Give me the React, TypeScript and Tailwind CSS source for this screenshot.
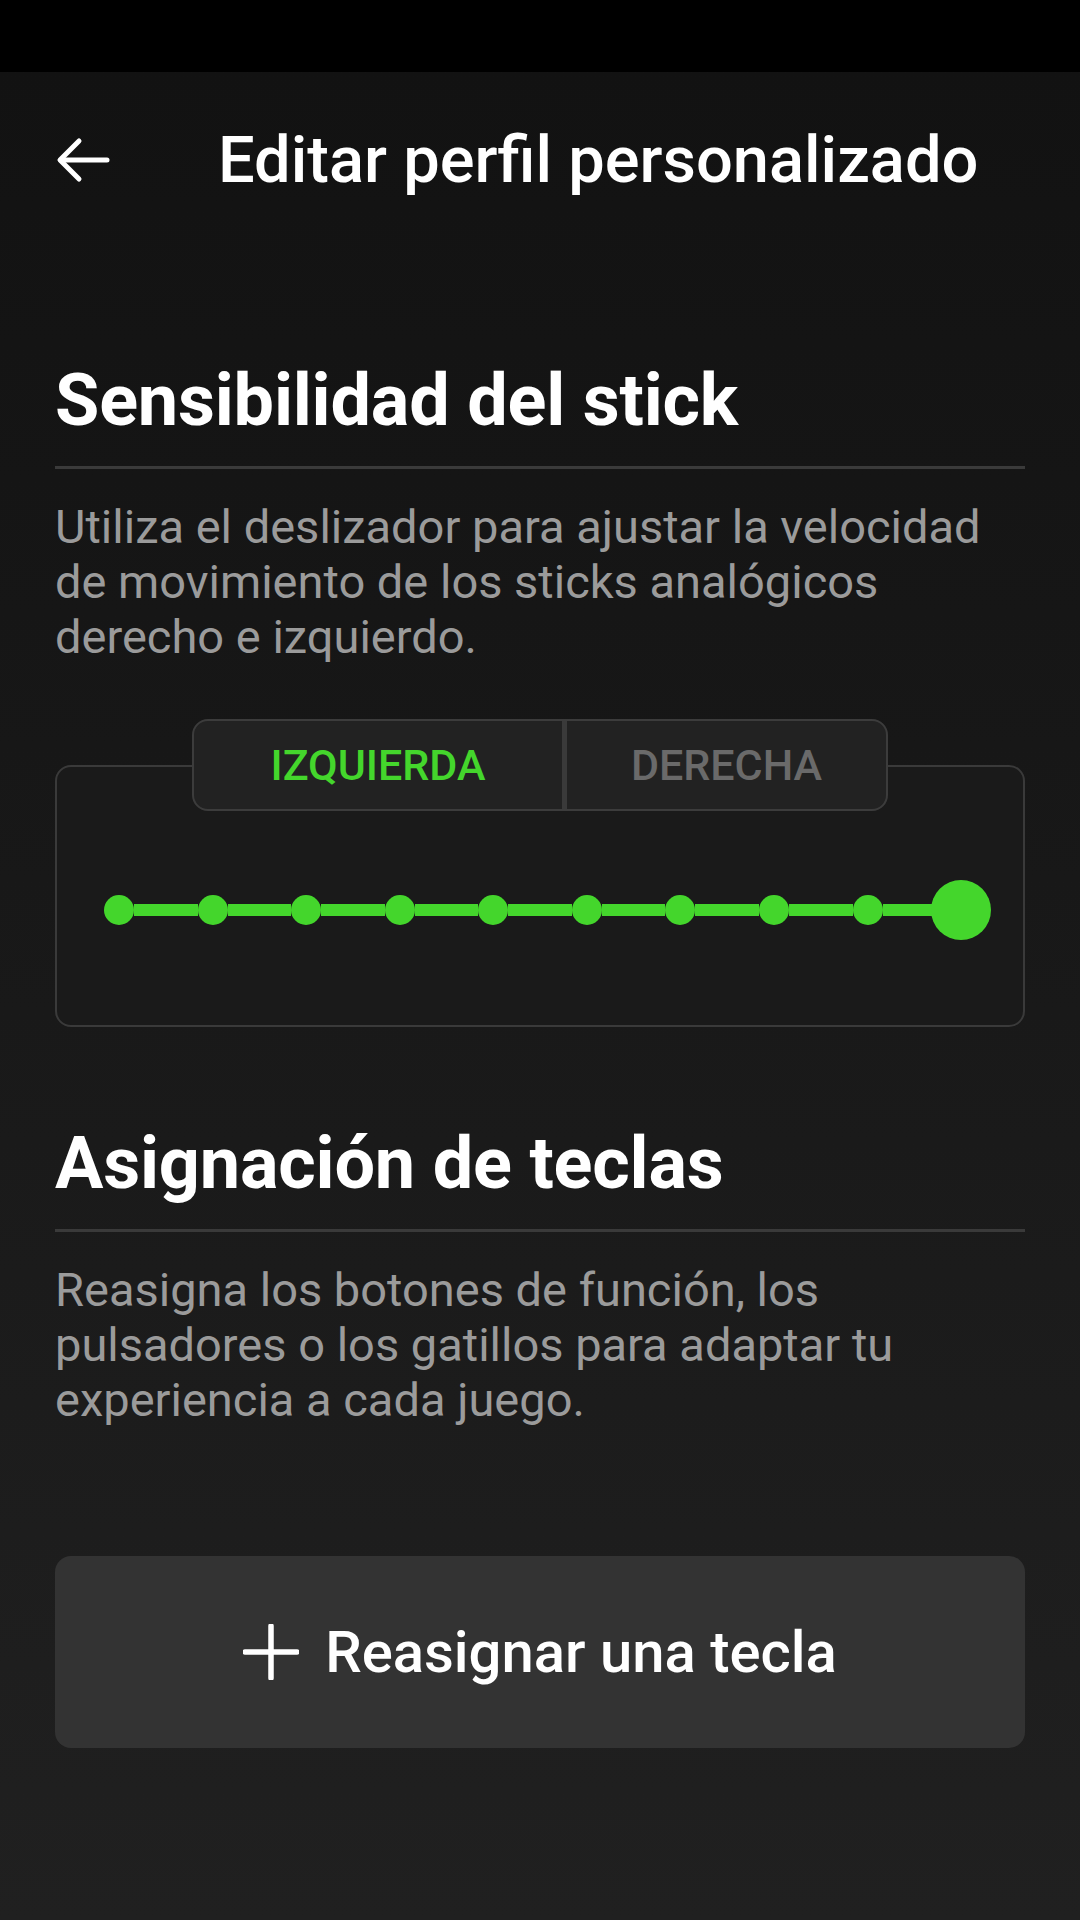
import React from 'react';

const GREEN = '#44d62c';

const BackArrow: React.FC = () => (
  <svg width="56" height="46" viewBox="0 0 56 46" fill="none" className="shrink-0">
    <path d="M52 23H6" stroke="white" strokeWidth="5" strokeLinecap="round" />
    <path d="M24 4L5 23L24 42" stroke="white" strokeWidth="5" strokeLinecap="round" strokeLinejoin="round" />
  </svg>
);

const PlusIcon: React.FC = () => (
  <svg width="56" height="56" viewBox="0 0 56 56" fill="none" className="shrink-0">
    <path d="M28 2V54M2 28H54" stroke="white" strokeWidth="5.5" strokeLinecap="round" />
  </svg>
);

interface SectionProps {
  title: string;
  description: string;
}

const SectionHeader: React.FC<SectionProps> = ({ title, description }) => (
  <div className="flex flex-col">
    <h2 className="text-[72px] leading-none font-bold text-white tracking-[-0.2px]">{title}</h2>
    <div className="mt-[29px] h-[3px] bg-[#3a3a3a]" />
    <p className="mt-[30px] text-[47px] leading-[55px] text-[#9b9b9b]">{description}</p>
  </div>
);

const StickSlider: React.FC<{ steps: number; value: number }> = ({ steps, value }) => {
  const items: React.ReactNode[] = [];
  for (let i = 0; i < steps; i++) {
    const active = i === value;
    if (i > 0) {
      items.push(<div key={`seg-${i}`} className="flex-1 h-[12px]" style={{ backgroundColor: GREEN }} />);
    }
    items.push(
      <div key={`dot-${i}`} className="w-[30px] h-[60px] shrink-0 flex items-center justify-center">
        <div
          className={active ? 'w-[60px] h-[60px] shrink-0 rounded-full' : 'w-[30px] h-[30px] shrink-0 rounded-full'}
          style={{ backgroundColor: GREEN }}
        />
      </div>
    );
  }
  return <div className="flex items-center mx-[47px]">{items}</div>;
};

const StickPanel: React.FC = () => (
  <div className="mt-[55px] flex flex-col items-center">
    {/* left / right stick toggle sits over the card's top border */}
    <div className="relative z-10 flex h-[92px] rounded-[16px] border-2 border-[#3c3c3c] bg-[#222222] overflow-hidden">
      <button className="w-[368px] flex items-center justify-center text-[43px] font-medium text-[#44d62c]">
        IZQUIERDA
      </button>
      <div className="w-[5px] bg-[#3a3a3a]" />
      <button className="w-[319px] flex items-center justify-center text-[43px] font-medium text-[#6a6a6a]">
        DERECHA
      </button>
    </div>
    <div className="-mt-[46px] w-full h-[262px] rounded-[16px] border-2 border-[#3a3a3a] bg-[#1a1a1a] pt-[113px]">
      <StickSlider steps={10} value={9} />
    </div>
  </div>
);

export default function App() {
  return (
    <div className="w-[1080px] h-[1920px] flex flex-col font-['Roboto',sans-serif]">
      <div className="h-[72px] bg-black shrink-0" />
      <div className="flex-1 flex flex-col px-[55px] bg-gradient-to-b from-[#121212] to-[#202020]">
        <header className="h-[176px] flex items-center">
          <BackArrow />
          <h1 className="ml-[107px] text-[65px] leading-none font-medium text-white">Editar perfil personalizado</h1>
        </header>

        <div className="mt-[117px]">
          <SectionHeader
            title="Sensibilidad del stick"
            description="Utiliza el deslizador para ajustar la velocidad de movimiento de los sticks analógicos derecho e izquierdo."
          />
        </div>

        <StickPanel />

        <div className="mt-[101px]">
          <SectionHeader
            title="Asignación de teclas"
            description="Reasigna los botones de función, los pulsadores o los gatillos para adaptar tu experiencia a cada juego."
          />
        </div>

        <button className="mt-[129px] h-[192px] w-full rounded-[16px] bg-[#333333] flex items-center justify-center gap-[26px]">
          <PlusIcon />
          <span className="text-[58px] leading-none font-medium text-white">Reasignar una tecla</span>
        </button>
      </div>
    </div>
  );
}
